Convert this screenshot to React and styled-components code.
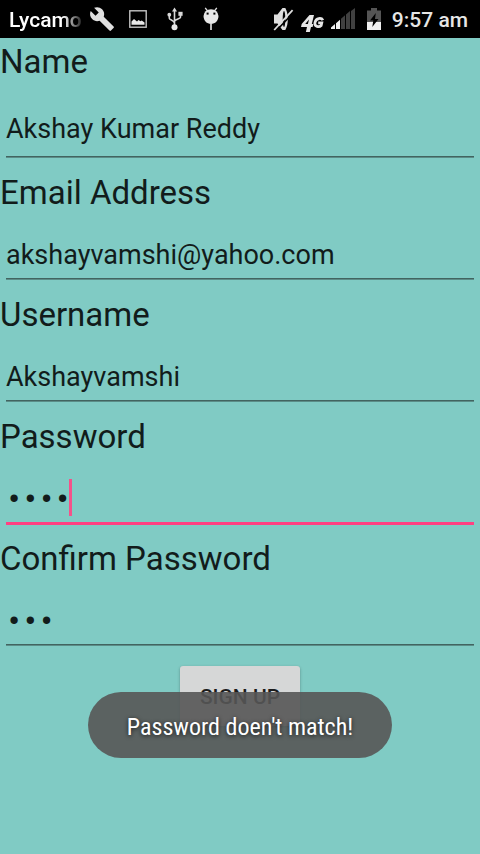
import React from "react";
import styled, { createGlobalStyle } from "styled-components";
import { MdBuild } from "react-icons/md";

const GlobalStyle = createGlobalStyle`
  *, *::before, *::after { box-sizing: border-box; }
  html, body { margin: 0; padding: 0; }
  body {
    background: #80cbc4;
    color: #121c1b;
    font-family: Roboto, "Liberation Sans", sans-serif;
  }
`;

const Screen = styled.div`
  position: relative;
  min-height: 100vh;
  background: #80cbc4;
`;

const StatusBar = styled.header`
  display: flex;
  justify-content: space-between;
  align-items: center;
  height: 38px;
  padding: 0 12px 0 9px;
  background: #000;
  color: #e6e6e6;
`;

const StatusGroup = styled.div`
  display: flex;
  align-items: center;
  gap: ${(p) => p.$gap}px;
`;

const Ticker = styled.span`
  width: 74px;
  padding-top: 2px;
  white-space: nowrap;
  font-size: 21px;
  line-height: 36px;
  font-weight: 500;
  color: #fff;
  mask-image: linear-gradient(to right, #000 54px, transparent 76px);
`;

const Notifications = styled(StatusGroup)`
  margin-left: 6px;
`;

const Clock = styled.time`
  padding-top: 2px;
  font-size: 21px;
  line-height: 36px;
  font-weight: 500;
`;

const Icon = styled.svg`
  display: block;
  flex: none;
`;

const Form = styled.form`
  display: flex;
  flex-direction: column;
`;

const Field = styled.div`
  display: flex;
  flex-direction: column;
  padding: 4px 0 11px;
`;

const Label = styled.label`
  font-size: 33px;
  line-height: 39px;
`;

const InputBox = styled.div`
  position: relative;
  display: flex;
  margin: 0 6px;
  padding: ${(p) => (p.$tall ? "32px 0 13px" : "27px 0 9px")};
`;

const Line = styled.span`
  position: absolute;
  left: 0;
  right: 0;
  top: calc(100% - 2px);
  height: ${(p) => (p.$active ? 3 : 2)}px;
  background: ${(p) =>
    p.$active ? "#ff4081" : "linear-gradient(#426460 50%, #5b8d88 50%)"};
`;

const Input = styled.input`
  width: 100%;
  height: 32px;
  margin: 0;
  padding: ${(p) => (p.type === "password" ? 2 : 0)}px 0 0;
  border: 0;
  outline: 0;
  background: transparent;
  color: inherit;
  font-family: ${(p) =>
    p.type === "password"
      ? '"Liberation Mono", monospace'
      : 'Roboto, "Liberation Sans", sans-serif'};
  font-size: 27px;
  line-height: 32px;
  caret-color: #ff4081;
`;

const Caret = styled.span`
  position: absolute;
  left: 63px;
  bottom: 8px;
  width: 3px;
  height: 37px;
  background: #f4528a;
`;

const SubmitButton = styled.button`
  align-self: center;
  min-width: 120px;
  height: 60px;
  margin-top: 9px;
  padding: 2px 20px 0;
  border: 0;
  border-radius: 3px;
  background: #d6d7d7;
  box-shadow: 0 1px 3px rgba(0, 0, 0, 0.3);
  color: #1b1b1b;
  font-family: Roboto, "Liberation Sans", sans-serif;
  font-size: 21px;
  line-height: 24px;
  font-weight: 500;
`;

const ToastLayer = styled.div`
  position: absolute;
  left: 0;
  right: 0;
  bottom: 96px;
  display: flex;
  justify-content: center;
  pointer-events: none;
`;

const Toast = styled.div`
  padding: 20px 39px 16px;
  border-radius: 33px;
  background: rgba(86, 86, 86, 0.9);
  color: #fff;
  font-family: "Roboto Condensed", Roboto, "Liberation Sans", sans-serif;
  font-size: 24px;
  line-height: 30px;
  white-space: nowrap;
  text-shadow: 0 1px 4px rgba(0, 0, 0, 0.75);
`;

const PictureIcon = () => (
  <Icon width="18" height="20" viewBox="0 0 18 20" aria-hidden="true">
    <rect x="0.8" y="1.8" width="16.4" height="16.4" fill="none" stroke="#c4c4c4" strokeWidth="1.4" />
    <path d="M2.500 15.800V12.500l2.500-2.500 3 2.600 1.500-1.600 2 1.300 1.200-.7 2.800 2v2.200z" fill="#e8e8e8" />
  </Icon>
);

const UsbIcon = () => (
  <Icon width="16" height="24" viewBox="0 0 16 24" aria-hidden="true">
    <path
      d="M7.500 20V3M2.300 8v3.200c0 1.600 5.200 2.400 5.200 5M13.500 7v3.200c0 1.600-6 2-6 4.400"
      fill="none"
      stroke="#d8d8d8"
      strokeWidth="1.6"
    />
    <path d="M7.500 0.500 10 4.400H5z" fill="#d8d8d8" />
    <circle cx="2.3" cy="7.7" r="1.9" fill="#d8d8d8" />
    <rect x="11.4" y="4.8" width="4.2" height="4" fill="#d8d8d8" />
    <circle cx="7.5" cy="20.2" r="3" fill="#e8e8e8" />
  </Icon>
);

const DebugIcon = () => (
  <Icon width="16" height="24" viewBox="0 0 16 24" aria-hidden="true">
    <path d="M2.200 0.800 4.600 4M13.800 0.800 11.400 4" stroke="#e0e0e0" strokeWidth="1.3" />
    <path d="M0.500 9a7.500 6.800 0 0 1 15 0c0 4.400-3.300 8-7.500 8S.5 13.400.5 9z" fill="#e6e6e6" />
    <rect x="3.6" y="5.6" width="2" height="2" fill="#000" />
    <rect x="10.4" y="5.6" width="2" height="2" fill="#000" />
    <path d="M8 17v6" stroke="#b8b8b8" strokeWidth="2" />
  </Icon>
);

const MutedIcon = () => (
  <Icon width="21" height="24" viewBox="0 0 21 24" aria-hidden="true">
    <path d="M1 7.500h3.500L9.500 1h2.800c1.800 3 2.500 6.700 2.500 11s-.7 8-2.500 11H9.500l-5-6.500H1z" fill="#dedede" />
    <ellipse cx="11" cy="12" rx="1.3" ry="8" fill="#000" />
    <path d="M3 24 21.500 4.500" stroke="#000" strokeWidth="1.6" />
    <path d="M1.200 23 19.600 3.200" stroke="#dedede" strokeWidth="1.8" />
  </Icon>
);

const NetworkIcon = () => (
  <Icon width="23" height="28" viewBox="0 -8 23 28" role="img" aria-label="4G">
    <path
      d="M8.500 2H13l-2.200 9h1.500l-.7 3H10l-1.200 5H4.900l1.100-5H0l.700-3zM8 6.600 4.200 11h2.700z"
      fill="#e6e6e6"
      fillRule="evenodd"
    />
    <path
      d="M21.800 7.200C20.600 4.600 15 4.700 14 9.500c-.9 4.400 4.200 5 6.200 3l.6-2.700h-3.600"
      fill="none"
      stroke="#e6e6e6"
      strokeWidth="2.7"
    />
  </Icon>
);

const SignalIcon = () => (
  <Icon width="25" height="22" viewBox="0 0 25 22" aria-hidden="true">
    <path d="M0 21v-1.500L4 16v5zM5 21v-5.800l4-3.500V21z" fill="#f0f0f0" />
    <path d="M10 21V10.800l4-3.500V21zM15 21V6.500L19 3v18zM20 21V3l4-3v21z" fill="#404040" />
  </Icon>
);

const BatteryIcon = () => (
  <Icon width="14" height="22" viewBox="0 0 14 22" aria-hidden="true">
    <path d="M0 2.500h4V0h6v2.500h4V14H0z" fill="#555" />
    <path d="M0 14h14v8H0z" fill="#f0f0f0" />
    <path d="M8.800 5 3 12.500h3.300l-1 6.500L11.500 11H8z" fill="#000" />
  </Icon>
);

const fields = [
  { id: "name", label: "Name", type: "text", value: "Akshay Kumar Reddy", tall: true },
  { id: "email", label: "Email Address", type: "email", value: "akshayvamshi@yahoo.com" },
  { id: "username", label: "Username", type: "text", value: "Akshayvamshi" },
  { id: "password", label: "Password", type: "password", value: "1234", active: true },
  { id: "confirm", label: "Confirm Password", type: "password", value: "123" },
];

function FormField({ id, label, type, value, tall, active }) {
  return (
    <Field>
      <Label htmlFor={id}>{label}</Label>
      <InputBox $tall={tall}>
        <Input id={id} type={type} defaultValue={value} spellCheck={false} autoComplete="off" />
        {active && <Caret />}
        <Line $active={active} />
      </InputBox>
    </Field>
  );
}

export default function App() {
  return (
    <>
      <GlobalStyle />
      <Screen>
        <StatusBar>
          <StatusGroup $gap={0}>
            <Ticker>Lycamo</Ticker>
            <Notifications $gap={20}>
              <StatusGroup $gap={14}>
                <MdBuild size={26} color="#e0e0e0" aria-hidden="true" />
                <PictureIcon />
              </StatusGroup>
              <UsbIcon />
              <DebugIcon />
            </Notifications>
          </StatusGroup>
          <StatusGroup $gap={11}>
            <StatusGroup $gap={7}>
              <MutedIcon />
              <NetworkIcon />
              <SignalIcon />
            </StatusGroup>
            <BatteryIcon />
            <Clock>9:57 am</Clock>
          </StatusGroup>
        </StatusBar>
        <Form onSubmit={(e) => e.preventDefault()}>
          {fields.map((f) => (
            <FormField key={f.id} {...f} />
          ))}
          <SubmitButton type="submit">SIGN UP</SubmitButton>
        </Form>
        <ToastLayer>
          <Toast role="status">Password doen't match!</Toast>
        </ToastLayer>
      </Screen>
    </>
  );
}
